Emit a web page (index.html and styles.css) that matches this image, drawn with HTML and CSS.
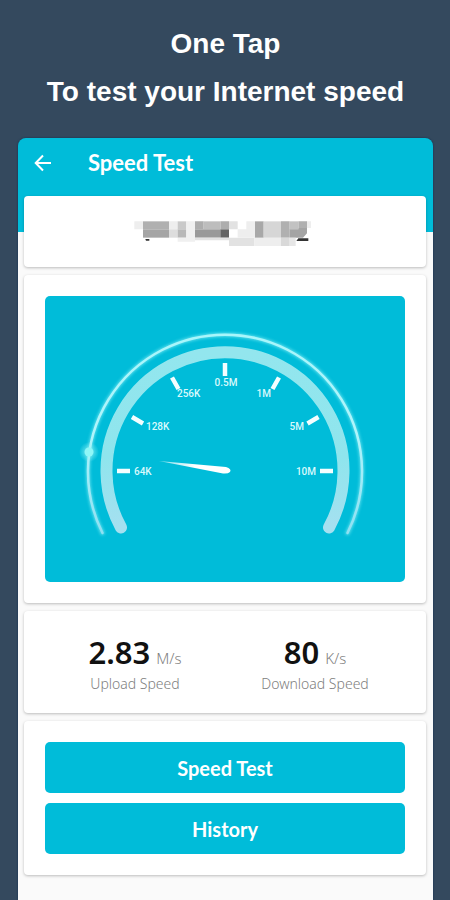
FILE: index.html
```html
<!DOCTYPE html>
<html lang="en">
<head>
<meta charset="utf-8">
<meta name="viewport" content="width=device-width, initial-scale=1">
<title>Speed Test</title>
<link rel="stylesheet" href="styles.css">
</head>
<body>
<h1 class="headline"><span>One Tap</span><span>To test your Internet speed</span></h1>
<main class="screen">
  <header class="bar">
    <button class="back" type="button" aria-label="Back">
      <svg width="18" height="18" viewBox="0 0 18 18" fill="none" stroke="currentColor" stroke-width="2"><path d="M17 9H2M9 1.500L1.700 9L9 16.500"/></svg>
    </button>
    <h2 class="title">Speed Test</h2>
  </header>
  <section class="card network">
    <svg class="mask" viewBox="0 0 630 90" role="img" aria-label="Hidden network name">
      <g transform="translate(0 -22)">
        <path fill="#eeeeee" d="M43 35h26v24h-26zM147 35h26v24h-26z"/>
        <path fill="#b0b0b0" d="M69 35h78v24h-78z"/>
        <path fill="#a5a5a5" d="M69 59h78v25h-78z"/>
        <path fill="#dddddd" d="M147 59h26v25h-26z"/>
        <path fill="#c9c9c9" d="M173 35h26v24h-26z"/>
        <path fill="#b8b8b8" d="M173 59h26v25h-26z"/>
        <path fill="#f0f0f0" d="M199 35h26v49h-26zM173 84h52v12h-52z"/>
        <path fill="#adadad" d="M225 35h26v24h-26zM301 35h26v24h-26z"/>
        <path fill="#bdbdbd" d="M251 35h50v24h-50z"/>
        <path fill="#999999" d="M225 59h76v25h-76z"/>
        <path fill="#646464" d="M301 59h26v25h-26z"/>
        <path fill="#e2e2e2" d="M327 35h26v24h-26zM225 84h102v8h-102zM327 84h76v25h-76z"/>
        <path fill="#eeeeee" d="M379 35h26v24h-26zM353 59h52v25h-52zM403 84h80v25h-80zM561 35h12v20h-12z"/>
        <path fill="#a8a8a8" d="M405 35h26v49h-26z"/>
        <path fill="#d6d6d6" d="M431 35h52v49h-52z"/>
        <path fill="#b0b0b0" d="M483 35h26v49h-26zM535 35h26v20h-26z"/>
        <path fill="#c2c2c2" d="M509 35h26v24h-26z"/>
        <path fill="#a4a4a4" d="M509 59h26v25h-26zM535 55h26v16l-12 13h-14z"/>
        <path fill="#d9d9d9" d="M483 84h26v25h-26z"/>
        <path fill="#e6e6e6" d="M509 84h18v25h-18z"/>
        <path fill="#333333" d="M535 86h30v8h-36zM76 88h12v5h-10z"/>
      </g>
    </svg>
  </section>
  <section class="card dial">
    <svg class="gauge" viewBox="0 0 360 286" role="img" aria-label="Speed gauge">
      <defs>
        <filter id="glow" x="-20%" y="-20%" width="140%" height="140%"><feGaussianBlur stdDeviation="1.500"/></filter>
        <radialGradient id="halo"><stop offset="0" stop-color="#9ff8f8" stop-opacity=".8"/><stop offset="1" stop-color="#9ff8f8" stop-opacity="0"/></radialGradient>
        <linearGradient id="line" x1="0" y1="0" x2="0" y2="1"><stop offset="0" stop-color="#a8f6fb"/><stop offset=".5" stop-color="#b0f4fb"/><stop offset="1" stop-color="#8fe0f2"/></linearGradient>
        <linearGradient id="band" x1="0" y1="0" x2="0" y2="1"><stop offset="0" stop-color="#93e6ee"/><stop offset=".6" stop-color="#8fe5ed"/><stop offset="1" stop-color="#a5e0f0"/></linearGradient>
        <linearGradient id="needle"><stop offset="0" stop-color="#fff" stop-opacity=".5"/><stop offset=".5" stop-color="#fff"/></linearGradient>
      </defs>
      <g fill="none" stroke-linecap="round">
        <path filter="url(#glow)" stroke="#5fe0ee" stroke-width="4" d="M57.500 237A137 137 0 1 1 302.500 237"/>
        <path stroke="url(#line)" stroke-width="2.500" d="M57.500 237A137 137 0 1 1 302.500 237"/>
        <path stroke="url(#band)" stroke-width="12" d="M76 231.500A118.500 118.500 0 1 1 284 231.500"/>
      </g>
      <circle cx="44" cy="156" r="10" fill="url(#halo)"/>
      <circle cx="44" cy="156" r="4.500" fill="#8ff7f7"/>
      <path stroke="#f4feff" stroke-width="4.500" d="M72 175h13M98 127.500l-11-6.500M133.500 93l-6.500-11.500M180 67v13M227.500 93l6.500-11.500M262.500 127.500l11-6.500M275 175h13"/>
      <path fill="url(#needle)" d="M114 165L181 171Q187 173 185 176Q183 178 178 177.500Z"/>
      <g class="scale">
        <text x="89" y="179">64K</text>
        <text x="101" y="134">128K</text>
        <text x="132" y="101">256K</text>
        <text x="181" y="90" text-anchor="middle">0.5M</text>
        <text x="226" y="101" text-anchor="end">1M</text>
        <text x="259" y="134" text-anchor="end">5M</text>
        <text x="271" y="179" text-anchor="end">10M</text>
      </g>
    </svg>
  </section>
  <section class="card results">
    <div class="result"><p class="value"><strong>2.83</strong><span>M/s</span></p><p class="label">Upload Speed</p></div>
    <div class="result"><p class="value"><strong>80</strong><span>K/s</span></p><p class="label">Download Speed</p></div>
  </section>
  <section class="card actions">
    <button class="action" type="button">Speed Test</button>
    <button class="action" type="button">History</button>
  </section>
</main>
</body>
</html>
```
FILE: styles.css
```css
* { box-sizing: border-box; margin: 0; }
html { background: #34495e; }
body {
  min-height: 100vh;
  display: flex;
  flex-direction: column;
  padding: 20px 17px 0 18px;
  font-family: Lato, sans-serif;
}
.headline {
  display: flex;
  flex-direction: column;
  align-items: center;
  height: 118px;
  font: bold 28px/48px "Liberation Sans", sans-serif;
  color: #fff;
  white-space: nowrap;
}
.screen {
  flex: 1;
  display: flex;
  flex-direction: column;
  gap: 8px;
  padding: 0 7px 24px 6px;
  border-radius: 8px 8px 0 0;
  background: linear-gradient(#00bcd9 94px, #fafafa 94px);
  box-shadow: 0 0 2px #0d2c50;
}
.bar {
  display: flex;
  align-items: center;
  gap: 36px;
  height: 50px;
  padding-left: 10px;
  color: #fff;
}
.back {
  display: flex;
  padding: 0;
  border: 0;
  background: none;
  color: inherit;
}
.title { font-size: 22px; line-height: 28px; }
.card {
  border-radius: 4px;
  background: #fff;
  box-shadow: 0 1px 3px rgba(0, 0, 0, .25);
}
.network {
  display: flex;
  align-items: center;
  justify-content: center;
  height: 71px;
}
.mask { width: 210px; }
.dial { padding: 21px; }
.gauge {
  display: block;
  width: 100%;
  border-radius: 5px;
  background: #00bcd9;
}
.scale { font: 500 10px Roboto, sans-serif; fill: #d9f9fc; }
.results {
  display: grid;
  grid-template-columns: 1fr 1fr;
  height: 102px;
  align-items: center;
  padding: 6px 21px 0;
  text-align: center;
  color: #808080;
  font-family: "Noto Sans", sans-serif;
  font-weight: 300;
}
.value {
  display: flex;
  align-items: baseline;
  justify-content: center;
  gap: 6px;
  font-size: 15px;
  line-height: 32px;
}
.value strong { font-size: 31px; font-weight: 600; color: #111; }
.label { font-size: 14px; line-height: 20px; }
.actions {
  display: flex;
  flex-direction: column;
  gap: 10px;
  padding: 21px;
}
.action {
  height: 51px;
  border: 0;
  border-radius: 5px;
  background: #00bcd9;
  color: #fff;
  font: bold 20px Lato, sans-serif;
}
```
